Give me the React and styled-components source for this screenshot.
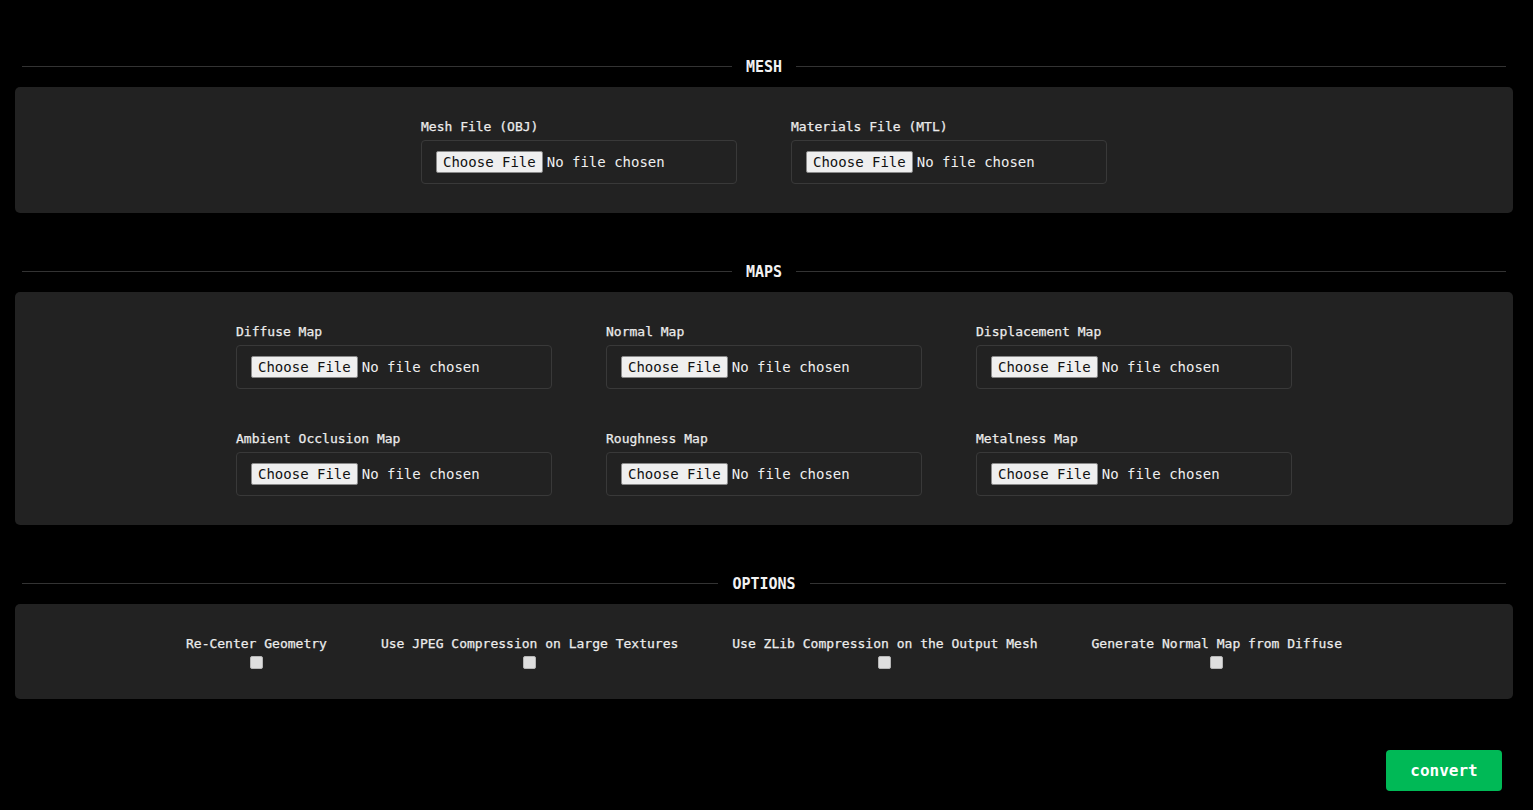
import React from "react";
import styled, { createGlobalStyle } from "styled-components";

const GlobalStyle = createGlobalStyle`
  html, body {
    margin: 0;
    padding: 0;
    background: #000;
  }
  body {
    font-family: "DejaVu Sans Mono", "Liberation Mono", monospace;
    color: #eee;
  }
`;

const Page = styled.div`
  display: flex;
  flex-direction: column;
  padding: 56px 20px 19px 15px;
  min-height: 810px;
  box-sizing: border-box;
`;

const SectionHeader = styled.div`
  display: flex;
  align-items: center;
  gap: 14px;
  height: 20px;
  margin: ${(p) => (p.$first ? "0" : "48px")} 7px 11px 7px;
  &::before,
  &::after {
    content: "";
    flex: 1;
    height: 1px;
    background: #333;
  }
`;

const HeaderTitle = styled.span`
  font-size: 15px;
  font-weight: bold;
  color: #f2f2f2;
  line-height: 18px;
  padding-top: 2px;
`;

const Panel = styled.section`
  background: #222;
  border-radius: 5px;
  padding: 32px 20px 29px;
  display: flex;
  justify-content: center;
`;

const FieldGrid = styled.div`
  display: grid;
  grid-template-columns: repeat(${(p) => p.$cols}, 316px);
  column-gap: 54px;
  row-gap: 42px;
`;

const Field = styled.div`
  display: flex;
  flex-direction: column;
  gap: 5px;
`;

const Label = styled.label`
  font-size: 13px;
  font-weight: normal;
  line-height: 16px;
  color: #ececec;
  -webkit-text-stroke: 0.25px #ececec;
`;

const FileBox = styled.div`
  height: 44px;
  box-sizing: border-box;
  border: 1px solid #393939;
  border-radius: 4px;
  padding: 0 14px;
  display: flex;
  align-items: center;
`;

const FileInput = styled.input`
  font-family: "DejaVu Sans Mono", "Liberation Mono", monospace;
  font-size: 14px;
  color: #f0f0f0;
  &::file-selector-button {
    font-family: "DejaVu Sans Mono", "Liberation Mono", monospace;
    font-size: 14px;
    color: #111;
    background: #efefef;
    border: 1px solid #8a8a8a;
    border-radius: 2px;
    padding: 2px 6px;
    margin-right: 4px;
  }
`;

const OptionsRow = styled.div`
  display: flex;
  gap: 54px;
  justify-content: center;
`;

const Option = styled.div`
  display: flex;
  flex-direction: column;
  align-items: center;
  gap: 4px;
`;

const Checkbox = styled.input`
  appearance: none;
  margin: 0 0 1px;
  width: 13px;
  height: 13px;
  box-sizing: border-box;
  background: #dedede;
  border: 1px solid #b5b5b5;
  border-radius: 2px;
`;

const Footer = styled.div`
  display: flex;
  justify-content: flex-end;
  margin-top: 51px;
  padding-right: 11px;
`;

const ConvertButton = styled.button`
  width: 116px;
  height: 41px;
  background: #00b956;
  color: #fff;
  border: none;
  border-radius: 4px;
  font-family: "DejaVu Sans Mono", "Liberation Mono", monospace;
  font-size: 16px;
  font-weight: bold;
  cursor: pointer;
`;

function FileField({ label }) {
  return (
    <Field>
      <Label>{label}</Label>
      <FileBox>
        <FileInput type="file" />
      </FileBox>
    </Field>
  );
}

const meshFields = ["Mesh File (OBJ)", "Materials File (MTL)"];
const mapFields = [
  "Diffuse Map",
  "Normal Map",
  "Displacement Map",
  "Ambient Occlusion Map",
  "Roughness Map",
  "Metalness Map",
];
const options = [
  "Re-Center Geometry",
  "Use JPEG Compression on Large Textures",
  "Use ZLib Compression on the Output Mesh",
  "Generate Normal Map from Diffuse",
];

export default function App() {
  return (
    <>
      <GlobalStyle />
      <Page>
        <SectionHeader $first>
          <HeaderTitle>MESH</HeaderTitle>
        </SectionHeader>
        <Panel>
          <FieldGrid $cols={2}>
            {meshFields.map((f) => (
              <FileField key={f} label={f} />
            ))}
          </FieldGrid>
        </Panel>

        <SectionHeader>
          <HeaderTitle>MAPS</HeaderTitle>
        </SectionHeader>
        <Panel>
          <FieldGrid $cols={3}>
            {mapFields.map((f) => (
              <FileField key={f} label={f} />
            ))}
          </FieldGrid>
        </Panel>

        <SectionHeader>
          <HeaderTitle>OPTIONS</HeaderTitle>
        </SectionHeader>
        <Panel>
          <OptionsRow>
            {options.map((o) => (
              <Option key={o}>
                <Label>{o}</Label>
                <Checkbox type="checkbox" />
              </Option>
            ))}
          </OptionsRow>
        </Panel>

        <Footer>
          <ConvertButton>convert</ConvertButton>
        </Footer>
      </Page>
    </>
  );
}
